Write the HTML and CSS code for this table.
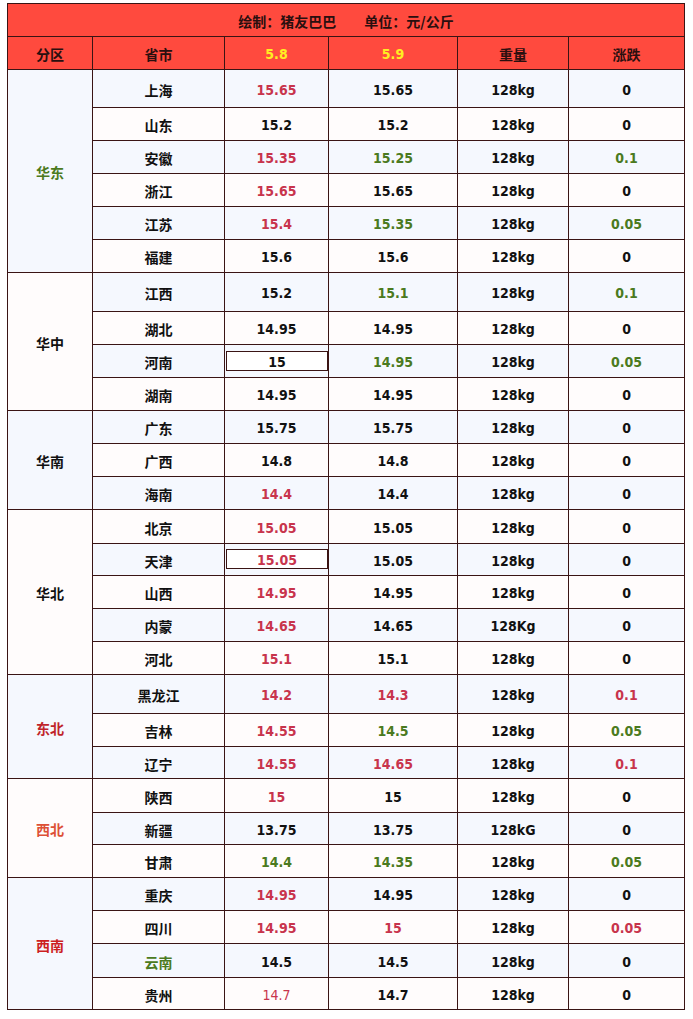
FILE: index.html
```html
<!DOCTYPE html>
<html lang="zh">
<head>
<meta charset="utf-8">
<title>猪价表</title>
<link rel="stylesheet" href="styles.css">
</head>
<body>
<table class="price">
  <colgroup>
    <col class="c1"><col class="c2"><col class="c3"><col class="c4"><col class="c5"><col class="c6">
  </colgroup>
  <thead>
    <tr class="title"><th colspan="6"><span class="t-a">绘制：猪友巴巴</span><span class="t-b">单位：元/公斤</span></th></tr>
    <tr class="head"><th>分区</th><th>省市</th><th class="date">5.8</th><th class="date">5.9</th><th>重量</th><th>涨跌</th></tr>
  </thead>
  <tbody>
    <tr class="b h38"><td rowspan="6" class="zone g b">华东</td><td>上海</td><td class="r">15.65</td><td>15.65</td><td>128kg</td><td>0</td></tr>
    <tr class="w"><td>山东</td><td>15.2</td><td>15.2</td><td>128kg</td><td>0</td></tr>
    <tr class="b"><td>安徽</td><td class="r">15.35</td><td class="g">15.25</td><td>128kg</td><td class="g">0.1</td></tr>
    <tr class="w"><td>浙江</td><td class="r">15.65</td><td>15.65</td><td>128kg</td><td>0</td></tr>
    <tr class="b"><td>江苏</td><td class="r">15.4</td><td class="g">15.35</td><td>128kg</td><td class="g">0.05</td></tr>
    <tr class="w"><td>福建</td><td>15.6</td><td>15.6</td><td>128kg</td><td>0</td></tr>

    <tr class="b h39"><td rowspan="4" class="zone w">华中</td><td>江西</td><td>15.2</td><td class="g">15.1</td><td>128kg</td><td class="g">0.1</td></tr>
    <tr class="w"><td>湖北</td><td>14.95</td><td>14.95</td><td>128kg</td><td>0</td></tr>
    <tr class="b"><td>河南</td><td class="sel"><span class="box">15</span></td><td class="g">14.95</td><td>128kg</td><td class="g">0.05</td></tr>
    <tr class="w"><td>湖南</td><td>14.95</td><td>14.95</td><td>128kg</td><td>0</td></tr>

    <tr class="b"><td rowspan="3" class="zone b">华南</td><td>广东</td><td>15.75</td><td>15.75</td><td>128kg</td><td>0</td></tr>
    <tr class="w"><td>广西</td><td>14.8</td><td>14.8</td><td>128kg</td><td>0</td></tr>
    <tr class="b"><td>海南</td><td class="r">14.4</td><td>14.4</td><td>128kg</td><td>0</td></tr>

    <tr class="w h34"><td rowspan="5" class="zone w">华北</td><td>北京</td><td class="r">15.05</td><td>15.05</td><td>128kg</td><td>0</td></tr>
    <tr class="b h32"><td>天津</td><td class="r sel"><span class="box">15.05</span></td><td>15.05</td><td>128kg</td><td>0</td></tr>
    <tr class="w"><td>山西</td><td class="r">14.95</td><td>14.95</td><td>128kg</td><td>0</td></tr>
    <tr class="b"><td>内蒙</td><td class="r">14.65</td><td>14.65</td><td>128Kg</td><td>0</td></tr>
    <tr class="w"><td>河北</td><td class="r">15.1</td><td>15.1</td><td>128kg</td><td>0</td></tr>

    <tr class="b h39"><td rowspan="3" class="zone ne b">东北</td><td>黑龙江</td><td class="r">14.2</td><td class="r">14.3</td><td>128kg</td><td class="r">0.1</td></tr>
    <tr class="w"><td>吉林</td><td class="r">14.55</td><td class="g">14.5</td><td>128kg</td><td class="g">0.05</td></tr>
    <tr class="b h32"><td>辽宁</td><td class="r">14.55</td><td class="r">14.65</td><td>128kg</td><td class="r">0.1</td></tr>

    <tr class="w h34"><td rowspan="3" class="zone nw w">西北</td><td>陕西</td><td class="r">15</td><td>15</td><td>128kg</td><td>0</td></tr>
    <tr class="b h32"><td>新疆</td><td>13.75</td><td>13.75</td><td>128kG</td><td>0</td></tr>
    <tr class="w"><td>甘肃</td><td class="g">14.4</td><td class="g">14.35</td><td>128kg</td><td class="g">0.05</td></tr>

    <tr class="b"><td rowspan="4" class="zone sw b">西南</td><td>重庆</td><td class="r">14.95</td><td>14.95</td><td>128kg</td><td>0</td></tr>
    <tr class="w"><td>四川</td><td class="r">14.95</td><td class="r">15</td><td>128kg</td><td class="r">0.05</td></tr>
    <tr class="b h34"><td class="g">云南</td><td>14.5</td><td>14.5</td><td>128kg</td><td>0</td></tr>
    <tr class="w h32"><td>贵州</td><td class="r thin">14.7</td><td>14.7</td><td>128kg</td><td>0</td></tr>
  </tbody>
</table>
</body>
</html>
```

FILE: styles.css
```css
html, body {
  background: #ffffff;
}
body {
  margin: 3px 0 0 7px;
  font-family: "DejaVu Sans Condensed", "DejaVu Sans", "Noto Sans CJK SC", sans-serif;
  font-size: 14px;
  font-weight: 700;
  color: #111111;
}
.price {
  border-collapse: collapse;
  table-layout: fixed;
  width: 677px;
  border: 1px solid #3a1414;
}
.c1 { width: 85px; }
.c2 { width: 132px; }
.c3 { width: 104px; }
.c4 { width: 129px; }
.c5 { width: 111px; }
.c6 { width: 116px; }

.price th, .price td {
  border: 1px solid #3a1414;
  padding: 2px 0 0 0;
  text-align: center;
  vertical-align: middle;
  font-weight: 700;
}
.price tr { height: 33px; }
.price tr.h38 { height: 38px; }
.price tr.h39 { height: 39px; }
.price tr.h34 { height: 34px; }
.price tr.h32 { height: 32px; }

.title th, .head th {
  background: #ff4a3e;
  color: #2a0f0f;
}
.title th {
  font-family: "Noto Sans CJK SC", sans-serif;
  font-size: 14px;
}
.t-b { margin-left: 28px; }
.head th.date { color: #ffee22; }

tr.b td, td.zone.b { background: #f5f8fe; }
tr.w td, td.zone.w { background: #fffcfc; }
tr td.zone.b { background: #f5f8fe; }
tr td.zone.w { background: #fffcfc; }

.price td.r { color: #c8344c; }
.price td.g { color: #4b7a20; }
.price td.zone.g { color: #4b7a20; }
.price td.zone.ne { color: #c0242a; }
.price td.zone.nw { color: #dd5036; }
.price td.zone.sw { color: #cc1f1f; }
.price td.thin { font-weight: 400; }

.price td.sel {
  padding: 4px 0 5px 1px;
}
.box {
  display: flex;
  align-items: center;
  justify-content: center;
  height: 20px;
  padding-top: 2px;
  box-sizing: border-box;
  border: 1px solid #3a1414;
  background: #ffffff;
}
```
